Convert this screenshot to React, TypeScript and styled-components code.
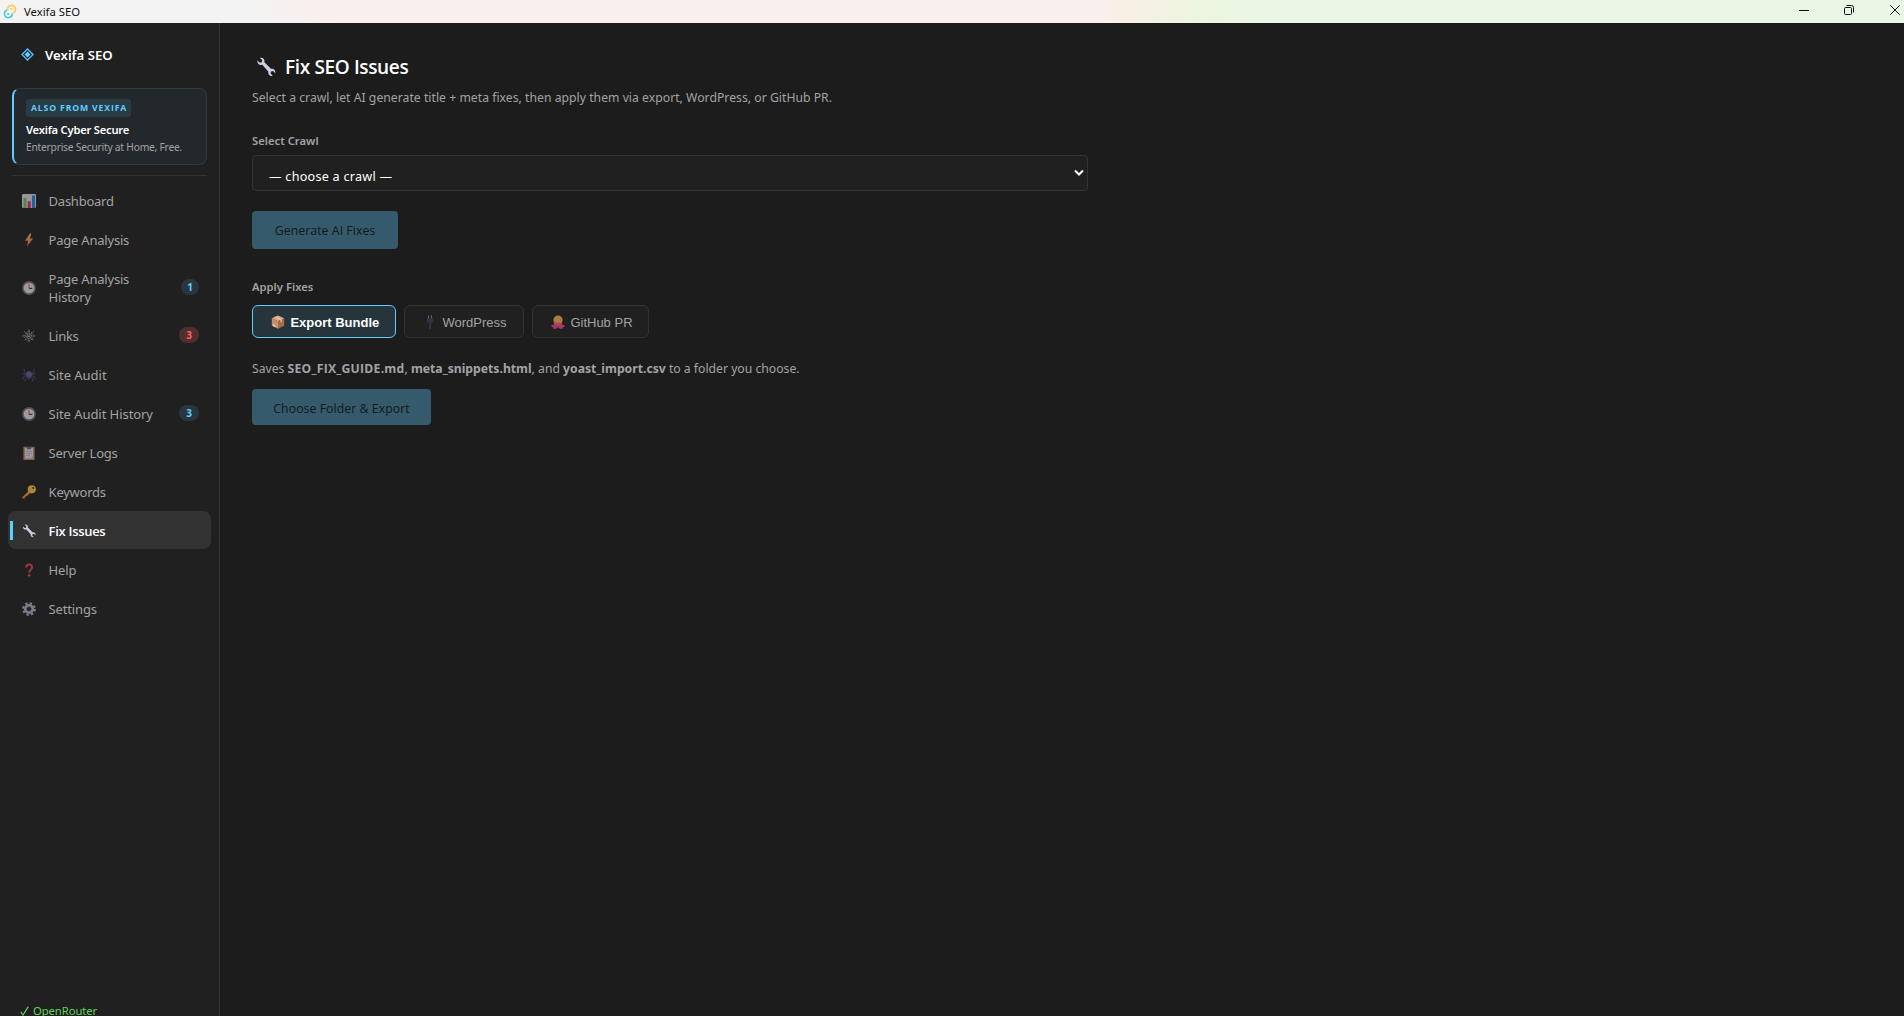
import React from "react";
import styled, { createGlobalStyle } from "styled-components";

const UI = `"Noto Sans", "Open Sans", sans-serif`;
const UI_PLAIN_CAPS = `"Open Sans", "Noto Sans", sans-serif`;
const ACCENT = "#60cdff";

const GlobalStyle = createGlobalStyle`
  *, *::before, *::after { box-sizing: border-box; }
  html, body { margin: 0; padding: 0; background: #1c1c1c; }
  body { font-family: ${UI}; overflow: hidden; }
  button { font-family: inherit; margin: 0; }
`;

const Window = styled.div`
  display: flex;
  flex-direction: column;
  height: 1016px;
  overflow: hidden;
  background: #1c1c1c;
`;

const TitleBar = styled.header`
  display: flex;
  align-items: center;
  flex: 0 0 23px;
  height: 23px;
  padding: 0 4px 1px 3px;
  background: linear-gradient(90deg, #f3f3f3 0, #f3f3f3 240px, #f9efed 330px, #f9efed 1105px, #f8efe3 1125px, #eaf6df 1210px, #e9f6e6 1290px, #e9f6e6 100%);
`;

const WindowTitle = styled.span`
  flex: 1;
  margin-left: 7px;
  padding-top: 1px;
  color: #111;
  font-size: 11.3px;
  line-height: 21px;
  white-space: nowrap;
`;

const WindowControls = styled.div`
  display: flex;
  align-items: center;
  gap: 35px;
  padding-bottom: 2px;
  color: #111;
  svg { display: block; }
  svg:last-child { margin-left: 1px; }
`;

const Body = styled.div`
  display: flex;
  flex: 1;
  min-height: 0;
`;

const Sidebar = styled.aside`
  display: flex;
  flex-direction: column;
  flex: 0 0 220px;
  background: #202020;
  border-right: 1px solid #333;
`;

const Brand = styled.div`
  display: flex;
  align-items: center;
  gap: 11px;
  height: 63px;
  margin-bottom: 2px;
  padding-left: 21px;
  color: #fff;
  font-size: 13.2px;
  font-weight: 600;
  svg { display: block; }
`;

const Promo = styled.section`
  display: flex;
  flex-direction: column;
  align-items: flex-start;
  height: 77px;
  margin: 0 12px;
  padding: 10px 0 0 12px;
  background: #22282b;
  border: 1px solid #283c47;
  border-left: 2px solid ${ACCENT};
  border-radius: 8px;
  white-space: nowrap;
`;

const PromoTag = styled.span`
  height: 18px;
  padding: 0 4px 0 5px;
  background: #293b45;
  border-radius: 3px;
  color: ${ACCENT};
  font-family: ${UI_PLAIN_CAPS};
  font-size: 8.7px;
  font-weight: 700;
  letter-spacing: 0.84px;
  line-height: 18px;
`;

const PromoTitle = styled.strong`
  margin-top: 5px;
  color: #fff;
  font-size: 11.2px;
  font-weight: 600;
  letter-spacing: -0.23px;
  line-height: 16px;
`;

const PromoText = styled.span`
  margin-top: 1px;
  color: #a3a3a3;
  font-size: 10.3px;
  letter-spacing: -0.25px;
  line-height: 16px;
`;

const Nav = styled.nav`
  display: flex;
  flex-direction: column;
  flex: 1;
  gap: 1px;
  margin: 10px 12px 0;
  padding-top: 5px;
  border-top: 1px solid #333;
`;

const NavItem = styled.a<{ $active?: boolean }>`
  position: relative;
  display: flex;
  align-items: center;
  margin: 0 -4px;
  padding: 11px 12px 9px 14px;
  border-radius: 8px;
  background: ${(p) => (p.$active ? "#323232" : "transparent")};
  color: ${(p) => (p.$active ? "#fff" : "#a3a3a3")};
  font-family: ${(p) => (p.$active ? UI_PLAIN_CAPS : UI)};
  font-size: 13px;
  font-weight: ${(p) => (p.$active ? 600 : 400)};
  line-height: 18px;
  svg { flex: none; display: block; opacity: ${(p) => (p.$active ? 1 : 0.66)}; }

  &::before {
    content: "";
    display: ${(p) => (p.$active ? "block" : "none")};
    position: absolute;
    left: 2px;
    top: 10px;
    width: 3px;
    height: 19px;
    background: ${ACCENT};
  }
`;

const NavLabel = styled.span<{ $tracking: number }>`
  flex: 1;
  margin-left: 12.6px;
  letter-spacing: ${(p) => p.$tracking}px;
  white-space: nowrap;
`;

const Badge = styled.span<{ $alert?: boolean; $w: number }>`
  width: ${(p) => p.$w}px;
  height: 16px;
  margin-top: -2px;
  border-radius: 8px;
  background: ${(p) => (p.$alert ? "#522d2d" : "#28373f")};
  color: ${(p) => (p.$alert ? "#ff6161" : ACCENT)};
  font-size: 10px;
  font-weight: 700;
  line-height: 16px;
  text-align: center;
`;

const Provider = styled.div`
  display: flex;
  flex: 0 0 15px;
  align-items: flex-start;
  gap: 4px;
  height: 15px;
  padding-left: 20px;
  color: #5fd35a;
  font-size: 11.3px;
  letter-spacing: -0.1px;
  line-height: 20px;
  white-space: nowrap;
  svg { display: block; margin-top: 5px; }
`;

const Main = styled.main`
  display: flex;
  flex-direction: column;
  align-items: flex-start;
  flex: 1;
  padding: 30px 32px;
  background: #1c1c1c;
`;

const Heading = styled.h1`
  display: flex;
  align-items: center;
  gap: 9px;
  height: 28px;
  margin: 0;
  padding-left: 4px;
  color: #fff;
  font-family: ${UI_PLAIN_CAPS};
  font-size: 19px;
  font-weight: 600;
  letter-spacing: -0.36px;
  line-height: 28px;
  svg { display: block; }
`;

const Subtitle = styled.p`
  margin: 7px 0 0;
  color: #a3a3a3;
  font-size: 12.2px;
  letter-spacing: 0.024px;
  line-height: 20px;
`;

const FieldLabel = styled.label<{ $top: number }>`
  margin-top: ${(p) => p.$top}px;
  color: #a3a3a3;
  font-size: 11.2px;
  font-weight: 600;
  letter-spacing: 0.03px;
  line-height: 16px;
`;

const SelectBox = styled.div`
  display: flex;
  align-items: center;
  justify-content: space-between;
  width: 836px;
  height: 36px;
  margin-top: 6px;
  padding: 0 3px 0 16px;
  background: #202020;
  border: 1px solid #333;
  border-radius: 4px;
  color: #fff;
  font-size: 12.6px;
  letter-spacing: 0.25px;
  svg { display: block; }
`;

const SelectValue = styled.span`
  padding-top: 7px;
  line-height: 18px;
`;

const ActionButton = styled.button<{ $w: number; $h: number; $top: number; $drop?: number }>`
  width: ${(p) => p.$w}px;
  height: ${(p) => p.$h}px;
  margin-top: ${(p) => p.$top}px;
  padding: ${(p) => p.$drop ?? 0}px 0 0;
  background: #345a6b;
  border: 0;
  border-radius: 4px;
  color: #11191d;
  font-family: ${UI_PLAIN_CAPS};
  font-size: 12.3px;
  font-weight: 500;
  letter-spacing: 0.05px;
  white-space: nowrap;
`;

const Tabs = styled.div`
  display: flex;
  gap: 8px;
  margin-top: 10px;
`;

const Tab = styled.button<{ $w: number; $active?: boolean }>`
  display: flex;
  align-items: center;
  width: ${(p) => p.$w}px;
  height: 33px;
  padding: 1px 0 0 18px;
  background: ${(p) => (p.$active ? "#26343b" : "#202020")};
  border: 1px solid ${(p) => (p.$active ? ACCENT : "#333")};
  border-radius: 6px;
  color: ${(p) => (p.$active ? "#fff" : "#a3a3a3")};
  font-family: "Liberation Sans", Arial, sans-serif;
  font-size: 13px;
  font-weight: ${(p) => (p.$active ? 600 : 400)};
  line-height: 15px;
  white-space: nowrap;
  svg {
    display: block;
    flex: none;
    margin-right: 5.4px;
    opacity: ${(p) => (p.$active ? 1 : 0.7)};
  }
`;

const Hint = styled.p`
  margin: 21px 0 0;
  color: #a3a3a3;
  font-size: 12.2px;
  line-height: 20px;
  white-space: nowrap;
  strong { font-weight: 700; }
  strong:first-of-type { font-family: ${UI_PLAIN_CAPS}; letter-spacing: 0.23px; }
`;

const Icon = ({ size = 14, children }: { size?: number; children: React.ReactNode }) => (
  <svg width={size} height={size} viewBox="0 0 14 14" fill="none">{children}</svg>
);

const ChartIcon = () => (
  <Icon>
    <rect width="14" height="14" rx="1.2" fill="#d5d0dc" />
    <rect x="1.5" y="4" width="3" height="10" fill="#6fbf5a" />
    <rect x="5.7" y="7.3" width="3" height="6.7" fill="#dc2a6e" />
    <rect x="10" y="1.6" width="3" height="12.4" fill="#2585d8" />
  </Icon>
);
const BoltIcon = () => (
  <Icon>
    <defs>
      <linearGradient id="bolt" x1="0" y1="0" x2="0" y2="1"><stop stopColor="#ffb054" /><stop offset="1" stopColor="#f0604e" /></linearGradient>
    </defs>
    <path d="M8 .4 3 7.700h3L5 13.600l6-8H7.900L9.300.4z" fill="url(#bolt)" />
  </Icon>
);
const ClockIcon = () => (
  <Icon>
    <circle cx="7" cy="7" r="6.9" fill="#6f6b78" />
    <circle cx="7" cy="7" r="5.3" fill="#dedae4" />
    <path d="M7 2.6v4.8" stroke="#e0446a" strokeWidth="1" />
    <path d="M7 7.4h3.4" stroke="#463f52" strokeWidth="1.3" />
  </Icon>
);
const WebIcon = () => (
  <Icon>
    <g stroke="#c4c0ca" strokeWidth=".7">
      <path d="M7 .3v13.4M.3 7h13.4M2.2 2.2l9.6 9.6M11.8 2.2l-9.6 9.6" strokeDasharray="1.5 .7" />
      <path d="M7 4.6 9 5 9.4 7 9 9 7 9.4 5 9 4.6 7 5 5z" strokeDasharray="1 .6" />
      <path d="M7 2 10.2 3.8 12 7l-1.8 3.2L7 12l-3.2-1.8L2 7l1.8-3.2z" strokeDasharray="1.2 1" />
    </g>
  </Icon>
);
const SpiderIcon = () => (
  <Icon>
    <path d="M5 6 2.5 4.6 2 .8M5 7 .4 5.4M5 7.8l-3 .6-1.4 3M5.4 9l-2 1.6-.4 3M9 6l2.5-1.4.5-3.8M9 7l4.6-1.6M9 7.8l3 .6 1.4 3M8.6 9l2 1.6.4 3" stroke="#5a5078" strokeWidth=".8" />
    <ellipse cx="7" cy="6.5" rx="2.8" ry="3.2" fill="#675a96" />
    <circle cx="7" cy="10" r="1.4" fill="#4f4474" />
  </Icon>
);
const ClipboardIcon = () => (
  <Icon>
    <rect x="1.4" y=".8" width="11.2" height="13.2" rx=".6" fill="#c08468" />
    <rect x="2.9" y="2" width="8.2" height="10.5" fill="#dcd7e2" />
    <path d="M4.8 1h4.400v2.300H4.800z" fill="#6b6476" />
    <path d="M4 5.500h6M4 7.500h6M4 9.500h4" stroke="#a49dae" strokeWidth=".7" />
    <path d="M8.500 12.500h2.600V9.900z" fill="#a9a2b3" />
  </Icon>
);
const KeyIcon = () => (
  <Icon>
    <path d="M7.400 5.200.4 11.900v1.700h2.300v-1.300h1.200v-1.300h1.300L8.900 7.400z" fill="#e68a3c" />
    <circle cx="9.8" cy="4.3" r="4.1" fill="#f5bc42" />
    <circle cx="11.2" cy="2.9" r="1" fill="#3a3224" />
  </Icon>
);
const WrenchIcon = ({ size = 14 }: { size?: number }) => (
  <Icon size={size}>
    <path d="M1 2.400 2.700 4l1.300-.3.400-1.400L2.800.7C4.700.2 6.300 1.600 5.900 3.600l4.600 4.700c1.700-.5 3.400.9 3 3l-1.600-1.500-1.400.4-.3 1.400 1.600 1.600c-2 .5-3.600-1-3.100-2.900L4.400 5.500C2.500 6 .6 4.500 1 2.400z" fill="#d3cbdf" />
  </Icon>
);
const QuestionIcon = () => (
  <Icon>
    <path d="M4.100 4.600C4.200 2.500 5.400 1.500 7.200 1.500S10.100 2.600 10.100 4.300c0 2.400-2.900 2.400-2.900 5.100" stroke="#e23a5a" strokeWidth="2.1" />
    <circle cx="7.1" cy="12.3" r="1.35" fill="#e23a5a" />
  </Icon>
);
const GearIcon = () => (
  <Icon>
    <circle cx="7" cy="7" r="3.7" stroke="#b3abc2" strokeWidth="2.8" />
    <circle cx="7" cy="7" r="5.8" stroke="#b3abc2" strokeWidth="2.2" strokeDasharray="2.3 2.255" />
    <circle cx="7" cy="7" r="2.3" stroke="#6d657c" strokeWidth=".8" />
  </Icon>
);
const BoxIcon = () => (
  <Icon>
    <path d="M7 .5 13.2 3.2 7 6.2.8 3.2z" fill="#dca883" />
    <path d="M.8 3.200 7 6.200v7.500L.8 10.700z" fill="#c98f69" />
    <path d="M13.200 3.200 7 6.200v7.500l6.200-3z" fill="#a46c4c" />
    <path d="m3.300 2.100 6.200 2.900v2.200l1.300-.6V4.400L4.800 1.500z" fill="#ecc8a9" />
    <path d="M2 9.500l2.500 1.200v1.200L2 10.700z" fill="#f1e6ea" />
  </Icon>
);
const PlugIcon = () => (
  <Icon>
    <path d="M5.500.3v3M8.500.3v3" stroke="#8a8496" strokeWidth="1" />
    <path d="M4 3h6v3.200L8.600 8.300H5.400L4 6.200z" fill="#40374f" />
    <path d="M7 8v6" stroke="#453c57" strokeWidth="1.8" />
  </Icon>
);
const OctopusIcon = () => (
  <Icon>
    <path d="M3 7.500h8l.6 2.400 2 .2c.2 1.600-.8 2.500-2.100 2.400l.4 1.300H8.600L7 12l-1.600 1.800H2.100l.4-1.300C1.200 12.600.2 11.700.4 10.100l2-.2z" fill="#e23e7e" />
    <circle cx="7" cy="5" r="4.6" fill="#e8a055" />
    <path d="M2.900 7.400h8.200l-.8 2.200H3.700z" fill="#e05c66" />
  </Icon>
);
const LogoIcon = () => (
  <svg width="13" height="13" viewBox="0 0 13 13" fill="none">
    <path d="M6.500 1 12 6.500 6.500 12 1 6.500z" stroke="#55b5f5" strokeWidth="1.5" />
    <path d="M6.500 3.500l3 3-3 3-3-3z" fill="#6cc8ff" />
  </svg>
);
const AppIcon = () => (
  <svg width="14" height="15" viewBox="0 0 14 15" fill="none">
    <path d="M4.700 5.600A3.900 3.900 0 1 1 9.800 9" stroke="#ffc94f" strokeWidth="1.5" />
    <path d="M9.300 9.400A3.900 3.900 0 1 1 4.200 6" stroke="#3fcfe0" strokeWidth="1.5" />
    <circle cx="8.5" cy="5" r="1.1" fill="#ffc94f" />
    <circle cx="5.2" cy="10" r="1.1" fill="#3fcfe0" />
  </svg>
);

type NavEntry = {
  label: React.ReactNode;
  icon: React.ReactNode;
  tracking: number;
  count?: string;
  alert?: boolean;
  active?: boolean;
};

const NAV: NavEntry[] = [
  { label: "Dashboard", icon: <ChartIcon />, tracking: -0.25 },
  { label: "Page Analysis", icon: <BoltIcon />, tracking: -0.22 },
  { label: <>Page Analysis<br />History</>, icon: <ClockIcon />, tracking: -0.22, count: "1" },
  { label: "Links", icon: <WebIcon />, tracking: -0.3, count: "3", alert: true },
  { label: "Site Audit", icon: <SpiderIcon />, tracking: -0.03 },
  { label: "Site Audit History", icon: <ClockIcon />, tracking: -0.06, count: "3" },
  { label: "Server Logs", icon: <ClipboardIcon />, tracking: -0.22 },
  { label: "Keywords", icon: <KeyIcon />, tracking: -0.25 },
  { label: "Fix Issues", icon: <WrenchIcon />, tracking: -0.3, active: true },
  { label: "Help", icon: <QuestionIcon />, tracking: -0.15 },
  { label: "Settings", icon: <GearIcon />, tracking: -0.15 },
];

export default function App() {
  return (
    <>
      <GlobalStyle />
      <Window>
        <TitleBar>
          <AppIcon />
          <WindowTitle>Vexifa SEO</WindowTitle>
          <WindowControls>
            <svg width="10" height="10" viewBox="0 0 10 10"><path d="M0 5.5h10" stroke="currentColor" /></svg>
            <svg width="10" height="10" viewBox="0 0 10 10" fill="none" stroke="currentColor"><rect x=".5" y="2.5" width="7" height="7" rx="1" /><path d="M2.500.5h5a2 2 0 0 1 2 2v5" /></svg>
            <svg width="10" height="10" viewBox="0 0 10 10"><path d="M.3.3l9.400 9.400M9.700.3.3 9.700" stroke="currentColor" /></svg>
          </WindowControls>
        </TitleBar>
        <Body>
          <Sidebar>
            <Brand><LogoIcon /><span>Vexifa SEO</span></Brand>
            <Promo>
              <PromoTag>ALSO FROM VEXIFA</PromoTag>
              <PromoTitle>Vexifa Cyber Secure</PromoTitle>
              <PromoText>Enterprise Security at Home, Free.</PromoText>
            </Promo>
            <Nav>
              {NAV.map((n, i) => (
                <NavItem key={i} $active={n.active}>
                  {n.icon}
                  <NavLabel $tracking={n.tracking}>{n.label}</NavLabel>
                  {n.count && <Badge $alert={n.alert} $w={n.count === "1" ? 18 : 20}>{n.count}</Badge>}
                </NavItem>
              ))}
            </Nav>
            <Provider>
              <svg width="9" height="10" viewBox="0 0 9 10" fill="none"><path d="M.8 5.800 3 9 8.300.6" stroke="currentColor" strokeWidth="1.2" /></svg>
              <span>OpenRouter</span>
            </Provider>
          </Sidebar>
          <Main>
            <Heading><WrenchIcon size={20} /><span>Fix SEO Issues</span></Heading>
            <Subtitle>Select a crawl, let AI generate title + meta fixes, then apply them via export, WordPress, or GitHub PR.</Subtitle>
            <FieldLabel $top={25}>Select Crawl</FieldLabel>
            <SelectBox>
              <SelectValue>— choose a crawl —</SelectValue>
              <svg width="10" height="8" viewBox="0 0 10 8" fill="none"><path d="M1 1.500l4 4 4-4" stroke="#fff" strokeWidth="2" /></svg>
            </SelectBox>
            <ActionButton $w={146} $h={38} $top={20}>Generate AI Fixes</ActionButton>
            <FieldLabel $top={30}>Apply Fixes</FieldLabel>
            <Tabs>
              <Tab $w={144} $active><BoxIcon />Export Bundle</Tab>
              <Tab $w={120}><PlugIcon />WordPress</Tab>
              <Tab $w={117}><OctopusIcon />GitHub PR</Tab>
            </Tabs>
            <Hint>
              Saves <strong>SEO_FIX_GUIDE.md</strong>, <strong>meta_snippets.html</strong>, and <strong>yoast_import.csv</strong> to a folder you choose.
            </Hint>
            <ActionButton $w={179} $h={36} $top={10} $drop={2}>Choose Folder &amp; Export</ActionButton>
          </Main>
        </Body>
      </Window>
    </>
  );
}
